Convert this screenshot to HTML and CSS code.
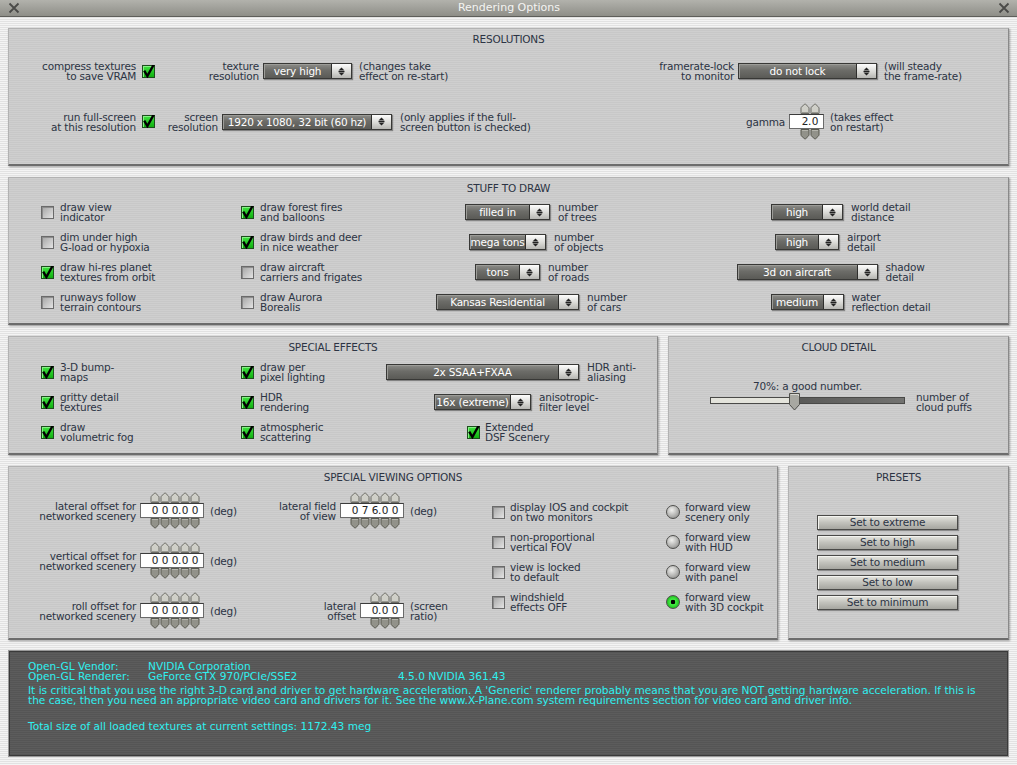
FILE: index.html
```html
<!DOCTYPE html>
<html lang="en">
<head>
<meta charset="utf-8">
<title>Rendering Options</title>
<link rel="stylesheet" href="styles.css">
</head>
<body>
<svg class="defs" width="0" height="0" aria-hidden="true">
  <defs>
    <symbol id="au" viewBox="0 0 10 11"><path d="M1 10.5V5.2Q1 4.6 1.5 4.1L4.3 1.3Q5 0.7 5.7 1.3L8.5 4.1Q9 4.6 9 5.2V10.5Z" fill="#cfcfc8" stroke="#6a6a64"/><path d="M2 9.5H8" stroke="#96968f"/></symbol>
    <symbol id="ad" viewBox="0 0 10 11"><path d="M1 0.5V5.8Q1 6.4 1.5 6.9L4.3 9.7Q5 10.3 5.7 9.7L8.5 6.9Q9 6.4 9 5.8V0.5Z" fill="#92928a" stroke="#58584f"/><path d="M2 1.5H8" stroke="#b4b4ac"/></symbol>
    <symbol id="ud" viewBox="0 0 7 9"><path d="M3.5 0.5L6.5 3.5H0.5Z" fill="#222"/><rect x="0.5" y="4" width="6" height="1" fill="#222"/><path d="M0.5 5.5H6.5L3.5 8.5Z" fill="#222"/></symbol>
    <symbol id="ck" viewBox="0 0 13 13"><path d="M2.2 5.6L5.4 11L11.8 -0.5" fill="none" stroke="#000" stroke-width="2.4"/></symbol>
  </defs>
</svg>

<header class="titlebar">
  <svg class="xic" width="12" height="12" viewBox="0 0 12 12"><path d="M1.5 1.5L10.5 10.5M10.5 1.5L1.5 10.5" stroke="#4a4a48" stroke-width="1.8"/></svg>
  <span class="ttl">Rendering Options</span>
  <svg class="xic" width="12" height="12" viewBox="0 0 12 12"><path d="M1.5 1.5L10.5 10.5M10.5 1.5L1.5 10.5" stroke="#4a4a48" stroke-width="1.8"/></svg>
</header>

<main class="main">
  <section class="panel res">
    <h2>RESOLUTIONS</h2>
    <div class="row res-r1">
      <div class="lbl ra w127">compress textures<br>to save VRAM</div>
      <span class="cb on ml6"><svg><use href="#ck"/></svg></span>
      <div class="lbl ra w104">texture<br>resolution</div>
      <div class="dd w89 ml4"><span class="dd-v">very high</span><span class="dd-b"><svg width="7" height="9"><use href="#ud"/></svg></span></div>
      <div class="lbl w150 ml7">(changes take<br>effect on re-start)</div>
      <div class="lbl ra w225">framerate-lock<br>to monitor</div>
      <div class="dd w139 ml4"><span class="dd-v">do not lock</span><span class="dd-b"><svg width="7" height="9"><use href="#ud"/></svg></span></div>
      <div class="lbl ml7">(will steady<br>the frame-rate)</div>
    </div>
    <div class="row res-r2">
      <div class="lbl ra w127">run full-screen<br>at this resolution</div>
      <span class="cb on ml6"><svg><use href="#ck"/></svg></span>
      <div class="lbl ra w63">screen<br>resolution</div>
      <div class="dd w170 ml4"><span class="dd-v">1920 x 1080, 32 bit (60 hz)</span><span class="dd-b"><svg width="7" height="9"><use href="#ud"/></svg></span></div>
      <div class="lbl w200 ml8">(only applies if the full-<br>screen button is checked)</div>
      <div class="lbl ra w185">gamma</div>
      <div class="spin ml4">
        <svg width="20" height="11"><use href="#au" x="0" width="10" height="11"/><use href="#au" x="10" width="10" height="11"/></svg>
        <div class="field fw35"><span>2</span><span class="dp">.</span><span>0</span></div>
        <svg width="20" height="11"><use href="#ad" x="0" width="10" height="11"/><use href="#ad" x="10" width="10" height="11"/></svg>
      </div>
      <div class="lbl ml6">(takes effect<br>on restart)</div>
    </div>
  </section>

  <section class="panel stuff">
    <h2>STUFF TO DRAW</h2>
    <div class="stuff-grid">
      <div class="chk"><span class="cb"></span><span class="lbl">draw view<br>indicator</span></div>
      <div class="chk"><span class="cb on"><svg><use href="#ck"/></svg></span><span class="lbl">draw forest fires<br>and balloons</span></div>
      <div class="ddrow"><div class="dd w85"><span class="dd-v">filled in</span><span class="dd-b"><svg width="7" height="9"><use href="#ud"/></svg></span></div><span class="lbl">number<br>of trees</span></div>
      <div class="ddrow"><div class="dd w72"><span class="dd-v">high</span><span class="dd-b"><svg width="7" height="9"><use href="#ud"/></svg></span></div><span class="lbl">world detail<br>distance</span></div>

      <div class="chk"><span class="cb"></span><span class="lbl">dim under high<br>G-load or hypoxia</span></div>
      <div class="chk"><span class="cb on"><svg><use href="#ck"/></svg></span><span class="lbl">draw birds and deer<br>in nice weather</span></div>
      <div class="ddrow"><div class="dd w77"><span class="dd-v">mega tons</span><span class="dd-b"><svg width="7" height="9"><use href="#ud"/></svg></span></div><span class="lbl">number<br>of objects</span></div>
      <div class="ddrow"><div class="dd w64"><span class="dd-v">high</span><span class="dd-b"><svg width="7" height="9"><use href="#ud"/></svg></span></div><span class="lbl">airport<br>detail</span></div>

      <div class="chk"><span class="cb on"><svg><use href="#ck"/></svg></span><span class="lbl">draw hi-res planet<br>textures from orbit</span></div>
      <div class="chk"><span class="cb"></span><span class="lbl">draw aircraft<br>carriers and frigates</span></div>
      <div class="ddrow"><div class="dd w65"><span class="dd-v">tons</span><span class="dd-b"><svg width="7" height="9"><use href="#ud"/></svg></span></div><span class="lbl">number<br>of roads</span></div>
      <div class="ddrow"><div class="dd w141"><span class="dd-v">3d on aircraft</span><span class="dd-b"><svg width="7" height="9"><use href="#ud"/></svg></span></div><span class="lbl">shadow<br>detail</span></div>

      <div class="chk"><span class="cb"></span><span class="lbl">runways follow<br>terrain contours</span></div>
      <div class="chk"><span class="cb"></span><span class="lbl">draw Aurora<br>Borealis</span></div>
      <div class="ddrow"><div class="dd w143"><span class="dd-v">Kansas Residential</span><span class="dd-b"><svg width="7" height="9"><use href="#ud"/></svg></span></div><span class="lbl">number<br>of cars</span></div>
      <div class="ddrow"><div class="dd w73"><span class="dd-v">medium</span><span class="dd-b"><svg width="7" height="9"><use href="#ud"/></svg></span></div><span class="lbl">water<br>reflection detail</span></div>
    </div>
  </section>

  <div class="pair">
    <section class="panel fx">
      <h2>SPECIAL EFFECTS</h2>
      <div class="fx-grid">
        <div class="chk"><span class="cb on"><svg><use href="#ck"/></svg></span><span class="lbl">3-D bump-<br>maps</span></div>
        <div class="chk"><span class="cb on"><svg><use href="#ck"/></svg></span><span class="lbl">draw per<br>pixel lighting</span></div>
        <div class="ddrow"><div class="dd w193"><span class="dd-v">2x SSAA+FXAA</span><span class="dd-b"><svg width="7" height="9"><use href="#ud"/></svg></span></div><span class="lbl">HDR anti-<br>aliasing</span></div>

        <div class="chk"><span class="cb on"><svg><use href="#ck"/></svg></span><span class="lbl">gritty detail<br>textures</span></div>
        <div class="chk"><span class="cb on"><svg><use href="#ck"/></svg></span><span class="lbl">HDR<br>rendering</span></div>
        <div class="ddrow"><div class="dd w97"><span class="dd-v">16x (extreme)</span><span class="dd-b"><svg width="7" height="9"><use href="#ud"/></svg></span></div><span class="lbl">anisotropic-<br>filter level</span></div>

        <div class="chk"><span class="cb on"><svg><use href="#ck"/></svg></span><span class="lbl">draw<br>volumetric fog</span></div>
        <div class="chk"><span class="cb on"><svg><use href="#ck"/></svg></span><span class="lbl">atmospheric<br>scattering</span></div>
        <div class="chk ext"><span class="cb on"><svg><use href="#ck"/></svg></span><span class="lbl">Extended<br>DSF Scenery</span></div>
      </div>
    </section>

    <section class="panel cloud">
      <h2>CLOUD DETAIL</h2>
      <div class="cloud-row">
        <div class="slider">
          <div class="sl-lbl">70%: a good number.</div>
          <div class="sl-area">
            <div class="track"></div>
            <svg class="thumb" width="11" height="18" viewBox="0 0 11 18"><path d="M0.5 0.5H10.5V11.5L5.5 17L0.5 11.5Z" fill="#a8a8a2" stroke="#4e4e4a"/><path d="M1.5 1.5H9.5V3" stroke="#d8d8d2" fill="none"/></svg>
          </div>
        </div>
        <div class="lbl puffs">number of<br>cloud puffs</div>
      </div>
    </section>
  </div>

  <div class="pair">
    <section class="panel view">
      <h2>SPECIAL VIEWING OPTIONS</h2>
      <div class="view-body">
        <div class="vcol-a">
          <div class="srow">
            <div class="lbl ra w127">lateral offset for<br>networked scenery</div>
            <div class="spin ml4">
              <svg width="50" height="11"><use href="#au" x="0" width="10" height="11"/><use href="#au" x="10" width="10" height="11"/><use href="#au" x="20" width="10" height="11"/><use href="#au" x="30" width="10" height="11"/><use href="#au" x="40" width="10" height="11"/></svg>
              <div class="field fw64"><span>0</span><span>0</span><span>0</span><span class="dp">.</span><span>0</span><span>0</span></div>
              <svg width="50" height="11"><use href="#ad" x="0" width="10" height="11"/><use href="#ad" x="10" width="10" height="11"/><use href="#ad" x="20" width="10" height="11"/><use href="#ad" x="30" width="10" height="11"/><use href="#ad" x="40" width="10" height="11"/></svg>
            </div>
            <div class="lbl ml6">(deg)</div>
          </div>
          <div class="srow">
            <div class="lbl ra w127">vertical offset for<br>networked scenery</div>
            <div class="spin ml4">
              <svg width="50" height="11"><use href="#au" x="0" width="10" height="11"/><use href="#au" x="10" width="10" height="11"/><use href="#au" x="20" width="10" height="11"/><use href="#au" x="30" width="10" height="11"/><use href="#au" x="40" width="10" height="11"/></svg>
              <div class="field fw64"><span>0</span><span>0</span><span>0</span><span class="dp">.</span><span>0</span><span>0</span></div>
              <svg width="50" height="11"><use href="#ad" x="0" width="10" height="11"/><use href="#ad" x="10" width="10" height="11"/><use href="#ad" x="20" width="10" height="11"/><use href="#ad" x="30" width="10" height="11"/><use href="#ad" x="40" width="10" height="11"/></svg>
            </div>
            <div class="lbl ml6">(deg)</div>
          </div>
          <div class="srow">
            <div class="lbl ra w127">roll offset for<br>networked scenery</div>
            <div class="spin ml4">
              <svg width="50" height="11"><use href="#au" x="0" width="10" height="11"/><use href="#au" x="10" width="10" height="11"/><use href="#au" x="20" width="10" height="11"/><use href="#au" x="30" width="10" height="11"/><use href="#au" x="40" width="10" height="11"/></svg>
              <div class="field fw64"><span>0</span><span>0</span><span>0</span><span class="dp">.</span><span>0</span><span>0</span></div>
              <svg width="50" height="11"><use href="#ad" x="0" width="10" height="11"/><use href="#ad" x="10" width="10" height="11"/><use href="#ad" x="20" width="10" height="11"/><use href="#ad" x="30" width="10" height="11"/><use href="#ad" x="40" width="10" height="11"/></svg>
            </div>
            <div class="lbl ml6">(deg)</div>
          </div>
        </div>

        <div class="vcol-b">
          <div class="srow">
            <div class="lbl ra w87">lateral field<br>of view</div>
            <div class="spin ml4">
              <svg width="50" height="11"><use href="#au" x="0" width="10" height="11"/><use href="#au" x="10" width="10" height="11"/><use href="#au" x="20" width="10" height="11"/><use href="#au" x="30" width="10" height="11"/><use href="#au" x="40" width="10" height="11"/></svg>
              <div class="field fw64"><span>0</span><span>7</span><span>6</span><span class="dp">.</span><span>0</span><span>0</span></div>
              <svg width="50" height="11"><use href="#ad" x="0" width="10" height="11"/><use href="#ad" x="10" width="10" height="11"/><use href="#ad" x="20" width="10" height="11"/><use href="#ad" x="30" width="10" height="11"/><use href="#ad" x="40" width="10" height="11"/></svg>
            </div>
            <div class="lbl ml6">(deg)</div>
          </div>
          <div class="srow lat">
            <div class="lbl ra w107">lateral<br>offset</div>
            <div class="spin ml4">
              <svg width="30" height="11"><use href="#au" x="0" width="10" height="11"/><use href="#au" x="10" width="10" height="11"/><use href="#au" x="20" width="10" height="11"/></svg>
              <div class="field fw44"><span>0</span><span class="dp">.</span><span>0</span><span>0</span></div>
              <svg width="30" height="11"><use href="#ad" x="0" width="10" height="11"/><use href="#ad" x="10" width="10" height="11"/><use href="#ad" x="20" width="10" height="11"/></svg>
            </div>
            <div class="lbl ml6">(screen<br>ratio)</div>
          </div>
        </div>

        <div class="vcol-c">
          <div class="chk"><span class="cb"></span><span class="lbl">display IOS and cockpit<br>on two monitors</span></div>
          <div class="chk"><span class="cb"></span><span class="lbl">non-proportional<br>vertical FOV</span></div>
          <div class="chk"><span class="cb"></span><span class="lbl">view is locked<br>to default</span></div>
          <div class="chk"><span class="cb"></span><span class="lbl">windshield<br>effects OFF</span></div>
        </div>

        <div class="vcol-d">
          <div class="rad"><span class="radio"></span><span class="lbl">forward view<br>scenery only</span></div>
          <div class="rad"><span class="radio"></span><span class="lbl">forward view<br>with HUD</span></div>
          <div class="rad"><span class="radio"></span><span class="lbl">forward view<br>with panel</span></div>
          <div class="rad"><span class="radio on"></span><span class="lbl">forward view<br>with 3D cockpit</span></div>
        </div>
      </div>
    </section>

    <section class="panel presets">
      <h2>PRESETS</h2>
      <div class="preset-list">
        <div class="btn">Set to extreme</div>
        <div class="btn">Set to high</div>
        <div class="btn">Set to medium</div>
        <div class="btn">Set to low</div>
        <div class="btn">Set to minimum</div>
      </div>
    </section>
  </div>

  <section class="infobox">
    <div class="gl">
      <span>Open-GL Vendor:</span><span>NVIDIA Corporation</span><span></span>
      <span>Open-GL Renderer:</span><span>GeForce GTX 970/PCIe/SSE2</span><span>4.5.0 NVIDIA 361.43</span>
    </div>
    <p class="para">It is critical that you use the right 3-D card and driver to get hardware acceleration. A 'Generic' renderer probably means that you are NOT getting hardware acceleration. If this is<br>the case, then you need an appropriate video card and drivers for it. See the www.X-Plane.com system requirements section for video card and driver info.</p>
    <p class="total">Total size of all loaded textures at current settings: 1172.43 meg</p>
  </section>
</main>
</body>
</html>
```

FILE: styles.css
```css
* { box-sizing: border-box; margin: 0; padding: 0; }
html, body { width: 1017px; height: 765px; overflow: hidden; }
body {
  font-family: "DejaVu Sans", Verdana, sans-serif;
  font-size: 10.5px;
  letter-spacing: -0.2px;
  line-height: 10px;
  color: #2c3444;
  background: repeating-linear-gradient(180deg, #f4f4f4 0, #f4f4f4 1px, #e2e2e2 1px, #e2e2e2 2px);
}
.defs { display: block; width: 0; height: 0; overflow: hidden; }

/* title bar */
.titlebar {
  height: 17px;
  display: flex;
  align-items: center;
  justify-content: space-between;
  padding: 0 7px 0 8px;
  background: linear-gradient(#b2b2ac, #8e8e88);
  border-bottom: 1px solid #5e5e5a;
}
.xic { display: block; }
.ttl { color: #f4f4f2; line-height: 12px; font-size: 11px; letter-spacing: 0; }

/* main layout */
.main { display: flex; flex-direction: column; gap: 11px; padding: 11px 8px 0; }
.pair { display: flex; gap: 10px; }

.panel {
  background: repeating-linear-gradient(180deg, #cfcfcf 0, #cfcfcf 1px, #c8c8c8 1px, #c8c8c8 2px);
  border: 1px solid #b2b2b2;
  border-right-color: #8a8a8a;
  border-bottom: 2px solid #6c6c6c;
  box-shadow: 1px 1px 2px rgba(0, 0, 0, .35);
}
.panel h2 { font-weight: normal; font-size: 10.5px; line-height: 12px; text-align: center; padding-top: 4px; }
.res { height: 138px; }
.stuff { height: 148px; }
.fx { width: 650px; height: 119px; }
.cloud { flex: 1; height: 119px; }
.view { width: 770px; height: 174px; }
.presets { flex: 1; height: 174px; }

/* generic bits */
.row { display: flex; align-items: center; }
.lbl { white-space: nowrap; flex: none; }
.ra { text-align: right; }
.w63 { width: 63px; } .w87 { width: 87px; } .w104 { width: 104px; } .w107 { width: 107px; }
.w127 { width: 127px; } .w150 { width: 150px; } .w185 { width: 185px; } .w200 { width: 200px; } .w225 { width: 225px; }
.ml4 { margin-left: 4px; } .ml6 { margin-left: 6px; } .ml7 { margin-left: 7px; } .ml8 { margin-left: 8px; }

/* checkbox */
.cb {
  flex: none;
  display: block;
  width: 13px;
  height: 13px;
  border: 1px solid #6a6a6a;
  background: linear-gradient(135deg, #a4a4a4, #e4e4e4);
  box-shadow: inset 1px 1px 0 #8c8c8c;
}
.cb.on {
  background: linear-gradient(#40e240, #10b010);
  border-color: #1d4f1d;
  box-shadow: inset 1px 1px 0 #86f086;
}
.cb svg { display: block; width: 13px; height: 13px; margin: -1px 0 0 -1px; overflow: visible; }

/* dropdown */
.dd {
  flex: none;
  display: flex;
  height: 16px;
  border: 1px solid #383836;
  box-shadow: 1px 1px 1px rgba(0, 0, 0, .35);
}
.dd-v {
  flex: 1;
  min-width: 0;
  color: #fff;
  text-align: center;
  line-height: 14px;
  white-space: nowrap;
  background: linear-gradient(#8c8c88, #6c6c68 45%, #5a5a56);
  border-right: 1px solid #2e2e2c;
  box-shadow: inset 1px 1px 0 #9c9c98;
}
.dd-b {
  flex: none;
  width: 19px;
  display: flex;
  align-items: center;
  justify-content: center;
  background: linear-gradient(#fdfdfd, #d6d6d2 60%, #b6b6b2);
}
.dd-b svg { display: block; }
.w64 { width: 64px; } .w65 { width: 65px; } .w72 { width: 72px; } .w73 { width: 73px; } .w77 { width: 77px; }
.w85 { width: 85px; } .w89 { width: 89px; } .w97 { width: 97px; } .w139 { width: 139px; } .w141 { width: 141px; }
.w143 { width: 143px; } .w170 { width: 170px; } .w193 { width: 193px; }

/* resolutions */
.res-r1 { margin-top: 16px; height: 20px; }
.res-r2 { margin-top: 22px; height: 37px; }

/* spinner */
.spin { display: flex; flex-direction: column; align-items: flex-end; flex: none; }
.spin svg { display: block; margin-right: 4px; }
.field {
  display: flex;
  justify-content: flex-end;
  padding-right: 3px;
  height: 15px;
  background: #fff;
  border: 1px solid #6a6a6a;
  border-top-color: #3a3a3a;
  line-height: 13px;
  color: #222;
  white-space: nowrap;
  letter-spacing: 0;
}
.field span { width: 10px; text-align: center; }
.field .dp { width: 0; text-align: left; margin-left: -2px; margin-right: 2px; }
.fw35 { width: 35px; } .fw44 { width: 44px; } .fw64 { width: 64px; }

/* stuff to draw */
.stuff-grid {
  display: grid;
  grid-template-columns: 200px 175px 183px 416px;
  grid-auto-rows: 20px;
  row-gap: 10px;
  margin-top: 8px;
  padding-left: 32px;
  align-items: center;
}
.chk { display: flex; align-items: center; gap: 6px; }
.ddrow { display: grid; grid-template-columns: minmax(0, 1fr) auto minmax(0, 1fr); align-items: center; }
.ddrow .dd { grid-column: 2; }
.ddrow .lbl { grid-column: 3; padding-left: 8px; }

/* special effects */
.fx-grid {
  display: grid;
  grid-template-columns: 200px 145px 193px;
  grid-auto-rows: 20px;
  row-gap: 10px;
  margin-top: 9px;
  padding-left: 32px;
  align-items: center;
}
.chk.ext { justify-self: start; margin-left: 81px; gap: 5px; }

/* cloud */
.cloud-row { display: flex; align-items: flex-end; margin-top: 27px; padding-left: 41px; }
.slider { width: 195px; }
.sl-lbl { text-align: center; line-height: 12px; white-space: nowrap; }
.sl-area { position: relative; height: 18px; padding-top: 5px; }
.track {
  height: 7px;
  border: 1px solid #4a4a48;
  background: linear-gradient(90deg, #e4e4dc 0, #e4e4dc 44%, #5a5a58 44%, #737371 100%);
}
.thumb { position: absolute; left: 79px; top: 1px; }
.puffs { margin-left: 11px; margin-bottom: -2px; }

/* special viewing */
.view-body { display: flex; margin-top: 9px; }
.vcol-a { width: 240px; flex: none; display: flex; flex-direction: column; gap: 13px; }
.vcol-b { width: 243px; flex: none; display: flex; flex-direction: column; }
.vcol-b .lat { margin-top: 63px; }
.vcol-c { width: 174px; flex: none; padding-top: 10px; display: flex; flex-direction: column; gap: 10px; }
.vcol-c .chk { height: 20px; gap: 5px; }
.vcol-d { padding-top: 10px; display: flex; flex-direction: column; gap: 10px; }
.srow { display: flex; align-items: center; height: 37px; }
.rad { display: flex; align-items: center; gap: 5px; height: 20px; }
.radio {
  flex: none;
  width: 14px;
  height: 14px;
  border-radius: 50%;
  border: 1px solid #4e4e4c;
  background: radial-gradient(circle at 40% 35%, #f0f0ee, #a8a8a6 65%, #7a7a78);
}
.radio.on { background: radial-gradient(circle at 50% 50%, #000 0, #000 2px, #44f044 2.6px, #0c9c0c 100%); }

/* presets */
.preset-list { display: flex; flex-direction: column; gap: 5px; margin-top: 32px; padding-left: 28px; }
.btn {
  width: 141px;
  height: 15px;
  line-height: 13px;
  text-align: center;
  border: 1px solid #4a4a48;
  background: linear-gradient(#e6e6e0, #c2c2bc 50%, #a6a6a0);
  box-shadow: inset 1px 1px 0 #f4f4f0, 1px 1px 1px rgba(0, 0, 0, .3);
}

/* info */
.infobox {
  height: 107px;
  margin-top: -1px;
  padding: 10px 19px 0;
  color: #2ef0f0;
  font-size: 10.6px;
  letter-spacing: 0;
  background: repeating-linear-gradient(180deg, #5c5c5c 0, #5c5c5c 1px, #555 1px, #555 2px);
  border: 1px solid #9a9a9a;
  box-shadow: inset 0 0 0 1px #3a3a3a;
}
.gl { display: grid; grid-template-columns: 120px 250px auto; }
.para { margin-top: 4px; white-space: nowrap; }
.total { margin-top: 16px; }
```
